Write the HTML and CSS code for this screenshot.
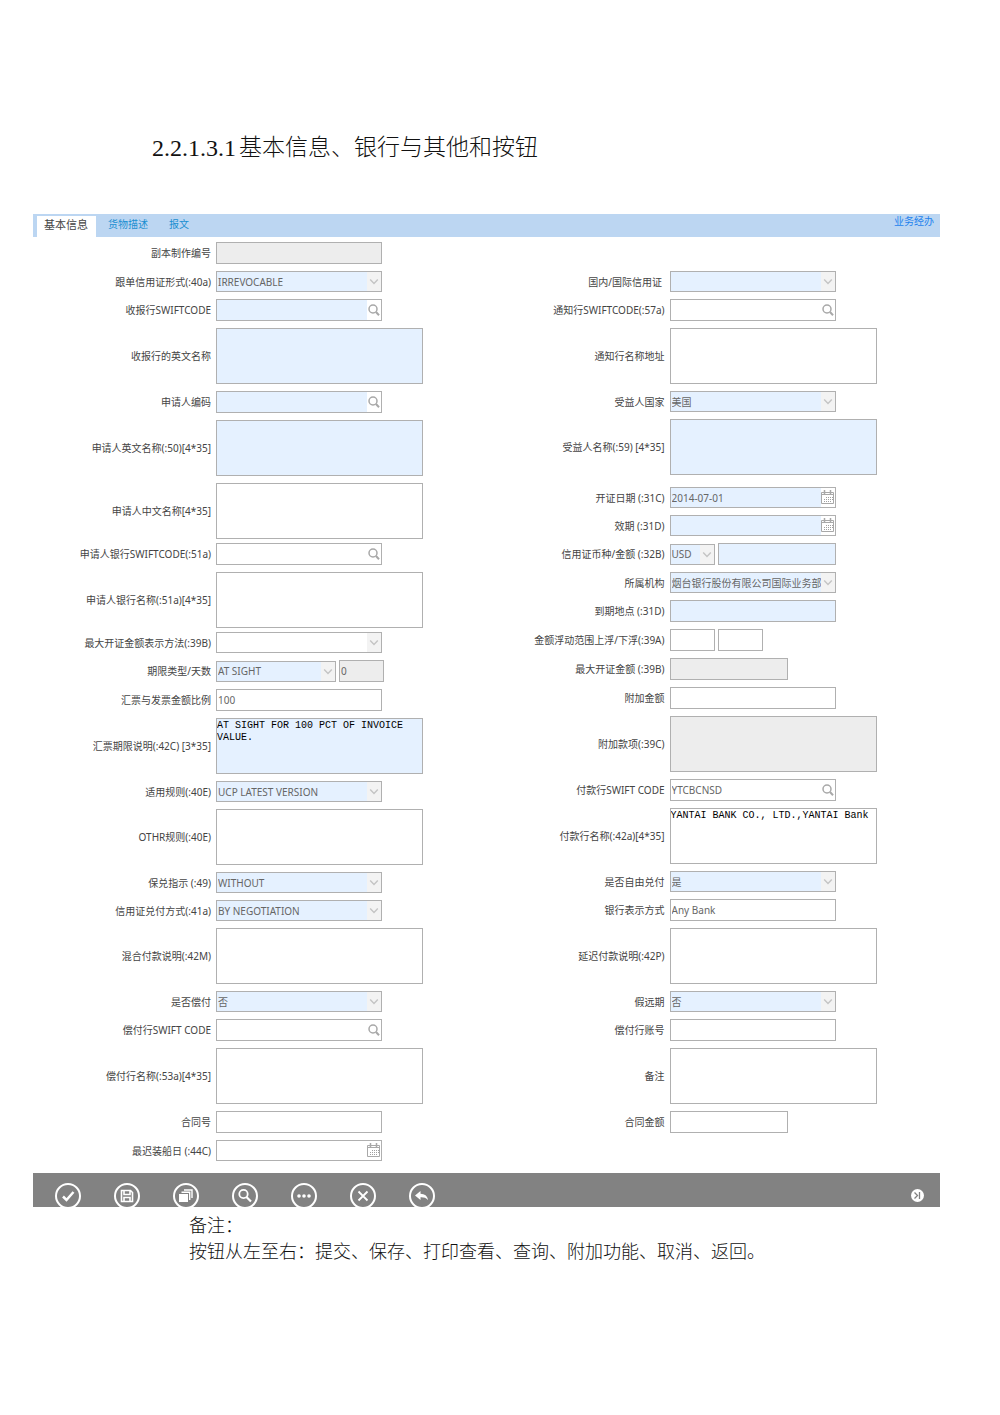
FILE: index.html
```html
<!DOCTYPE html>
<html lang="zh-CN">
<head>
    <meta charset="UTF-8">
    <meta name="viewport" content="width=device-width, initial-scale=1.0">
    <title>基本信息、银行与其他和按钮</title>
    <link rel="stylesheet" href="styles.css">
</head>
<body>
    <!-- shared icons -->
    <svg class="symbols" aria-hidden="true">
        <symbol id="arrow" viewBox="0 0 14 20"><path d="M3 8l4 4 4-4" fill="none" stroke="#c4c4c4" stroke-width="1.5"/></symbol>
        <symbol id="search" viewBox="0 0 14 20"><circle cx="6" cy="9" r="4" fill="none" stroke="#a8a8a8" stroke-width="1.5"/><path d="M9 12l3 3.2" stroke="#a8a8a8" stroke-width="2"/></symbol>
        <symbol id="calendar" viewBox="0 0 14 19">
            <path d="M.5 4.500h12v11h-12zM1 6.500h11" fill="none" stroke="#a8a8a8"/>
            <path d="M3.500 2v4M9.500 2v4" stroke="#a8a8a8" stroke-width="1.500"/>
            <path d="M5 9.500h7M3 11.500h9M3 13.500h7" stroke="#a0a0a0" stroke-dasharray="1 1"/>
        </symbol>
    </svg>

    <h1><span>2.2.1.3.1</span><span class="title">基本信息、银行与其他和按钮</span></h1>

    <div class="panel">
        <div class="tabs">
            <a href="#" class="tab active">基本信息</a>
            <a href="#" class="tab">货物描述</a>
            <a href="#" class="tab">报文</a>
            <a href="#" class="operator">业务经办</a>
        </div>

        <form class="form">
            <div class="column">
                <div class="row"><label for="copyNo">副本制作编号</label><input class="box" type="text" id="copyNo" disabled></div>
                <div class="row"><label for="f40a">跟单信用证形式(:40a)</label><div class="box combo required"><select id="f40a"><option>IRREVOCABLE</option></select><svg><use href="#arrow"/></svg></div></div>
                <div class="row"><label for="recvSwift">收报行SWIFTCODE</label><div class="box lookup required"><input type="text" id="recvSwift"><button type="button" aria-label="查询"><svg><use href="#search"/></svg></button></div></div>
                <div class="row"><label for="recvName">收报行的英文名称</label><textarea class="required" id="recvName"></textarea></div>
                <div class="row"><label for="appCode">申请人编码</label><div class="box lookup required"><input type="text" id="appCode"><button type="button" aria-label="查询"><svg><use href="#search"/></svg></button></div></div>
                <div class="row"><label for="f50">申请人英文名称(:50)[4*35]</label><textarea class="required" id="f50"></textarea></div>
                <div class="row"><label for="appCn">申请人中文名称[4*35]</label><textarea id="appCn"></textarea></div>
                <div class="row tight"><label for="f51aCode">申请人银行SWIFTCODE(:51a)</label><div class="box lookup"><input type="text" id="f51aCode"><button type="button" aria-label="查询"><svg><use href="#search"/></svg></button></div></div>
                <div class="row"><label for="f51a">申请人银行名称(:51a)[4*35]</label><textarea id="f51a"></textarea></div>
                <div class="row tight"><label for="f39bType">最大开证金额表示方法(:39B)</label><div class="box combo"><select id="f39bType"><option></option></select><svg><use href="#arrow"/></svg></div></div>
                <div class="row"><label for="tenor">期限类型/天数</label><div class="box combo required medium"><select id="tenor"><option>AT SIGHT</option></select><svg><use href="#arrow"/></svg></div><input class="box tiny" type="text" aria-label="天数" value="0" disabled></div>
                <div class="row"><label for="percent">汇票与发票金额比例</label><input class="box" type="text" id="percent" value="100"></div>
                <div class="row"><label for="f42c">汇票期限说明(:42C) [3*35]</label><textarea class="required" id="f42c">AT SIGHT FOR 100 PCT OF INVOICE
VALUE.</textarea></div>
                <div class="row"><label for="f40e">适用规则(:40E)</label><div class="box combo required"><select id="f40e"><option>UCP LATEST VERSION</option></select><svg><use href="#arrow"/></svg></div></div>
                <div class="row"><label for="othr">OTHR规则(:40E)</label><textarea id="othr"></textarea></div>
                <div class="row"><label for="f49">保兑指示 (:49)</label><div class="box combo required"><select id="f49"><option>WITHOUT</option></select><svg><use href="#arrow"/></svg></div></div>
                <div class="row"><label for="f41a">信用证兑付方式(:41a)</label><div class="box combo required"><select id="f41a"><option>BY NEGOTIATION</option></select><svg><use href="#arrow"/></svg></div></div>
                <div class="row"><label for="f42m">混合付款说明(:42M)</label><textarea id="f42m"></textarea></div>
                <div class="row"><label for="reimburse">是否偿付</label><div class="box combo required"><select id="reimburse"><option>否</option></select><svg><use href="#arrow"/></svg></div></div>
                <div class="row"><label for="f53aCode">偿付行SWIFT CODE</label><div class="box lookup"><input type="text" id="f53aCode"><button type="button" aria-label="查询"><svg><use href="#search"/></svg></button></div></div>
                <div class="row"><label for="f53a">偿付行名称(:53a)[4*35]</label><textarea id="f53a"></textarea></div>
                <div class="row"><label for="contractNo">合同号</label><input class="box" type="text" id="contractNo"></div>
                <div class="row"><label for="f44c">最迟装船日 (:44C)</label><div class="box date"><input type="text" id="f44c"><button type="button" aria-label="选择日期"><svg><use href="#calendar"/></svg></button></div></div>
            </div>

            <div class="column second">
                <div class="row"><label for="lcScope">国内/国际信用证&nbsp;</label><div class="box combo required"><select id="lcScope"><option></option></select><svg><use href="#arrow"/></svg></div></div>
                <div class="row"><label for="f57aCode">通知行SWIFTCODE(:57a)</label><div class="box lookup"><input type="text" id="f57aCode"><button type="button" aria-label="查询"><svg><use href="#search"/></svg></button></div></div>
                <div class="row"><label for="adviseName">通知行名称地址</label><textarea id="adviseName"></textarea></div>
                <div class="row"><label for="country">受益人国家</label><div class="box combo required"><select id="country"><option>美国</option></select><svg><use href="#arrow"/></svg></div></div>
                <div class="row"><label for="f59">受益人名称(:59) [4*35]</label><textarea class="required" id="f59"></textarea></div>
                <div class="row loose"><label for="f31c">开证日期 (:31C)</label><div class="box date required"><input type="text" id="f31c" value="2014-07-01"><button type="button" aria-label="选择日期"><svg><use href="#calendar"/></svg></button></div></div>
                <div class="row"><label for="f31d">效期 (:31D)</label><div class="box date required"><input type="text" id="f31d"><button type="button" aria-label="选择日期"><svg><use href="#calendar"/></svg></button></div></div>
                <div class="row"><label for="currency">信用证币种/金额 (:32B)</label><div class="box combo required tiny"><select id="currency"><option>USD</option></select><svg><use href="#arrow"/></svg></div><input class="box required short" type="text" aria-label="金额"></div>
                <div class="row"><label for="branch">所属机构</label><div class="box combo required"><select id="branch"><option>烟台银行股份有限公司国际业务部</option></select><svg><use href="#arrow"/></svg></div></div>
                <div class="row"><label for="expiryPlace">到期地点 (:31D)</label><input class="box required" type="text" id="expiryPlace"></div>
                <div class="row"><label for="f39a">金额浮动范围上浮/下浮(:39A)</label><input class="box tiny" type="text" id="f39a"><input class="box tiny" type="text" aria-label="下浮"></div>
                <div class="row"><label for="f39b">最大开证金额 (:39B)</label><input class="box short" type="text" id="f39b" disabled></div>
                <div class="row"><label for="extraAmount">附加金额</label><input class="box" type="text" id="extraAmount"></div>
                <div class="row"><label for="f39c">附加款项(:39C)</label><textarea id="f39c" disabled></textarea></div>
                <div class="row"><label for="f42aCode">付款行SWIFT CODE</label><div class="box lookup"><input type="text" id="f42aCode" value="YTCBCNSD"><button type="button" aria-label="查询"><svg><use href="#search"/></svg></button></div></div>
                <div class="row"><label for="f42a">付款行名称(:42a)[4*35]</label><textarea id="f42a">YANTAI BANK CO., LTD.,YANTAI Bank</textarea></div>
                <div class="row"><label for="freely">是否自由兑付</label><div class="box combo required"><select id="freely"><option>是</option></select><svg><use href="#arrow"/></svg></div></div>
                <div class="row"><label for="bankType">银行表示方式</label><input class="box" type="text" id="bankType" value="Any Bank"></div>
                <div class="row"><label for="f42p">延迟付款说明(:42P)</label><textarea id="f42p"></textarea></div>
                <div class="row"><label for="usance">假远期</label><div class="box combo required"><select id="usance"><option>否</option></select><svg><use href="#arrow"/></svg></div></div>
                <div class="row"><label for="reimAccount">偿付行账号</label><input class="box" type="text" id="reimAccount"></div>
                <div class="row"><label for="remark">备注</label><textarea id="remark"></textarea></div>
                <div class="row"><label for="contractAmount">合同金额</label><input class="box short" type="text" id="contractAmount"></div>
            </div>
        </form>

        <div class="toolbar">
            <button type="button" aria-label="提交"><svg viewBox="0 0 26 26"><path d="M8 13.5l3.5 3.5L18.500 9" stroke-width="2.5"/></svg></button>
            <button type="button" aria-label="保存"><svg viewBox="0 0 26 26"><path d="M7.500 7.500h9l2 2v9h-11zM10 7.500v4h6v-4M10 18.500v-4h6v4" stroke-width="1.6"/></svg></button>
            <button type="button" aria-label="打印查看"><svg viewBox="0 0 26 26"><path class="solid" d="M6 11h9v8H6z"/><path d="M8.500 9.300h8.200v7.700M11 7h8v8" stroke-width="1.4"/></svg></button>
            <button type="button" aria-label="查询"><svg viewBox="0 0 26 26"><circle cx="11.5" cy="11" r="4.2" stroke-width="1.8"/><path d="M14.500 14l4.500 4.500" stroke-width="2.2"/></svg></button>
            <button type="button" aria-label="附加功能"><svg viewBox="0 0 26 26"><circle class="solid" cx="8" cy="13" r="1.8"/><circle class="solid" cx="13" cy="13" r="1.8"/><circle class="solid" cx="18" cy="13" r="1.8"/></svg></button>
            <button type="button" aria-label="取消"><svg viewBox="0 0 26 26"><path d="M8.500 8.500l9 9M17.500 8.500l-9 9" stroke-width="1.8"/></svg></button>
            <button type="button" aria-label="返回"><svg viewBox="0 0 26 26"><path class="solid" d="M6 12.500l5.500-4.500v2.800c4 .2 7 2 7.500 6.200-2-2.400-4.300-2.900-7.500-2.800V17z"/></svg></button>
            <button type="button" class="collapse" aria-label="收起"><svg viewBox="0 0 13 13"><circle class="solid" cx="6.5" cy="6.5" r="6.5"/><path class="dark" d="M3.500 3.500l3 3-3 3M8.500 3v7" stroke-width="1.3"/></svg></button>
        </div>
    </div>

    <div class="notes">
        <p>备注：</p>
        <p>按钮从左至右：提交、保存、打印查看、查询、附加功能、取消、返回。</p>
    </div>
</body>
</html>
```
FILE: styles.css
```css
* {
    box-sizing: border-box;
}
body {
    margin: 0;
    background-color: #fff;
    font-family: "Noto Sans", "Noto Sans CJK SC", sans-serif;
    font-size: 10px;
    color: #444;
}
.symbols {
    display: none;
}
h1 {
    display: flex;
    gap: 3px;
    margin: 132px 0 50px 152px;
    font-family: "Liberation Serif", "Noto Sans CJK SC", serif;
    font-size: 24px;
    font-weight: 300;
    line-height: 32px;
    color: #111;
}
.title {
    font-size: 23px;
}
.panel {
    margin: 0 60px 0 33px;
}

/* tabs */
.tabs {
    display: flex;
    height: 23px;
    padding: 2px 6px 0 4px;
    background-color: #bcd6f2;
}
.tabs a {
    color: #1a8fd1;
    text-decoration: none;
}
.tab {
    padding: 0 9px 0 12px;
    line-height: 17px;
}
.tabs .active {
    padding: 0 8px 0 7px;
    background-color: #fff;
    font-size: 11px;
    color: #444;
}
.tabs .operator {
    margin-left: auto;
    line-height: 10px;
    color: #1e82ee;
}

/* form */
.form {
    display: grid;
    grid-template-columns: 1fr 1fr;
    padding: 5px 0 12px;
}
.column {
    display: flex;
    flex-direction: column;
    gap: 7px;
}
.second {
    padding-top: 29px;
}
.row {
    display: flex;
    align-items: center;
    gap: 3px;
}
.tight {
    margin-top: -3px;
}
.loose {
    margin-top: 5px;
}
label {
    width: 180px;
    padding-right: 2px;
    line-height: 16px;
    text-align: right;
    white-space: nowrap;
}
input, select, button {
    margin: 0;
    padding: 0;
    border: none;
    border-radius: 0;
    background-color: transparent;
    font: inherit;
    color: #666;
}
.box {
    display: flex;
    width: 166px;
    height: 22px;
    padding: 0 1px;
    border: 1px solid #b0b0b0;
    background-color: #fff;
}
.combo, .date {
    height: 21px;
    padding-right: 0;
}
.lookup {
    padding-right: 0;
}
.box input, .box select {
    flex: 1;
    min-width: 0;
    appearance: none;
}
.box svg {
    display: block;
    width: 14px;
    height: 100%;
}
.combo svg {
    background-color: #f3f3f3;
}
.lookup svg, .date svg {
    background-color: #fff;
}
.medium {
    width: 120px;
}
.short {
    width: 118px;
}
.tiny {
    width: 45px;
}
textarea {
    display: block;
    width: 207px;
    height: 56px;
    margin: 0;
    padding: 1px 0;
    border: 1px solid #b0b0b0;
    background-color: #fff;
    font-family: "Liberation Mono", monospace;
    font-size: 10px;
    line-height: 12px;
    color: #000;
    resize: none;
}
.required {
    background-color: #e5f1ff;
}
input:disabled, textarea:disabled {
    background-color: #ededed;
}

/* toolbar */
.toolbar {
    display: flex;
    align-items: center;
    gap: 33px;
    height: 34px;
    padding: 11px 16px 0 22px;
    background-color: #828282;
}
.toolbar button {
    flex: none;
    width: 26px;
    height: 26px;
    border: 2px solid #fff;
    border-radius: 50%;
}
.toolbar svg {
    display: block;
    width: 26px;
    height: 26px;
    margin: -2px;
    fill: none;
    stroke: #fff;
}
.toolbar .solid {
    fill: #fff;
    stroke: none;
}
.toolbar .dark {
    stroke: #828282;
}
.toolbar .collapse, .collapse svg {
    width: 13px;
    height: 13px;
    margin: 0;
    border: none;
}
.toolbar .collapse {
    margin-left: auto;
}

.notes {
    margin: 6px 0 0 189px;
    font-family: "Liberation Serif", "Noto Sans CJK SC", serif;
    font-size: 18px;
    font-weight: 300;
    line-height: 26px;
    color: #111;
}
.notes p {
    margin: 0;
}
```
